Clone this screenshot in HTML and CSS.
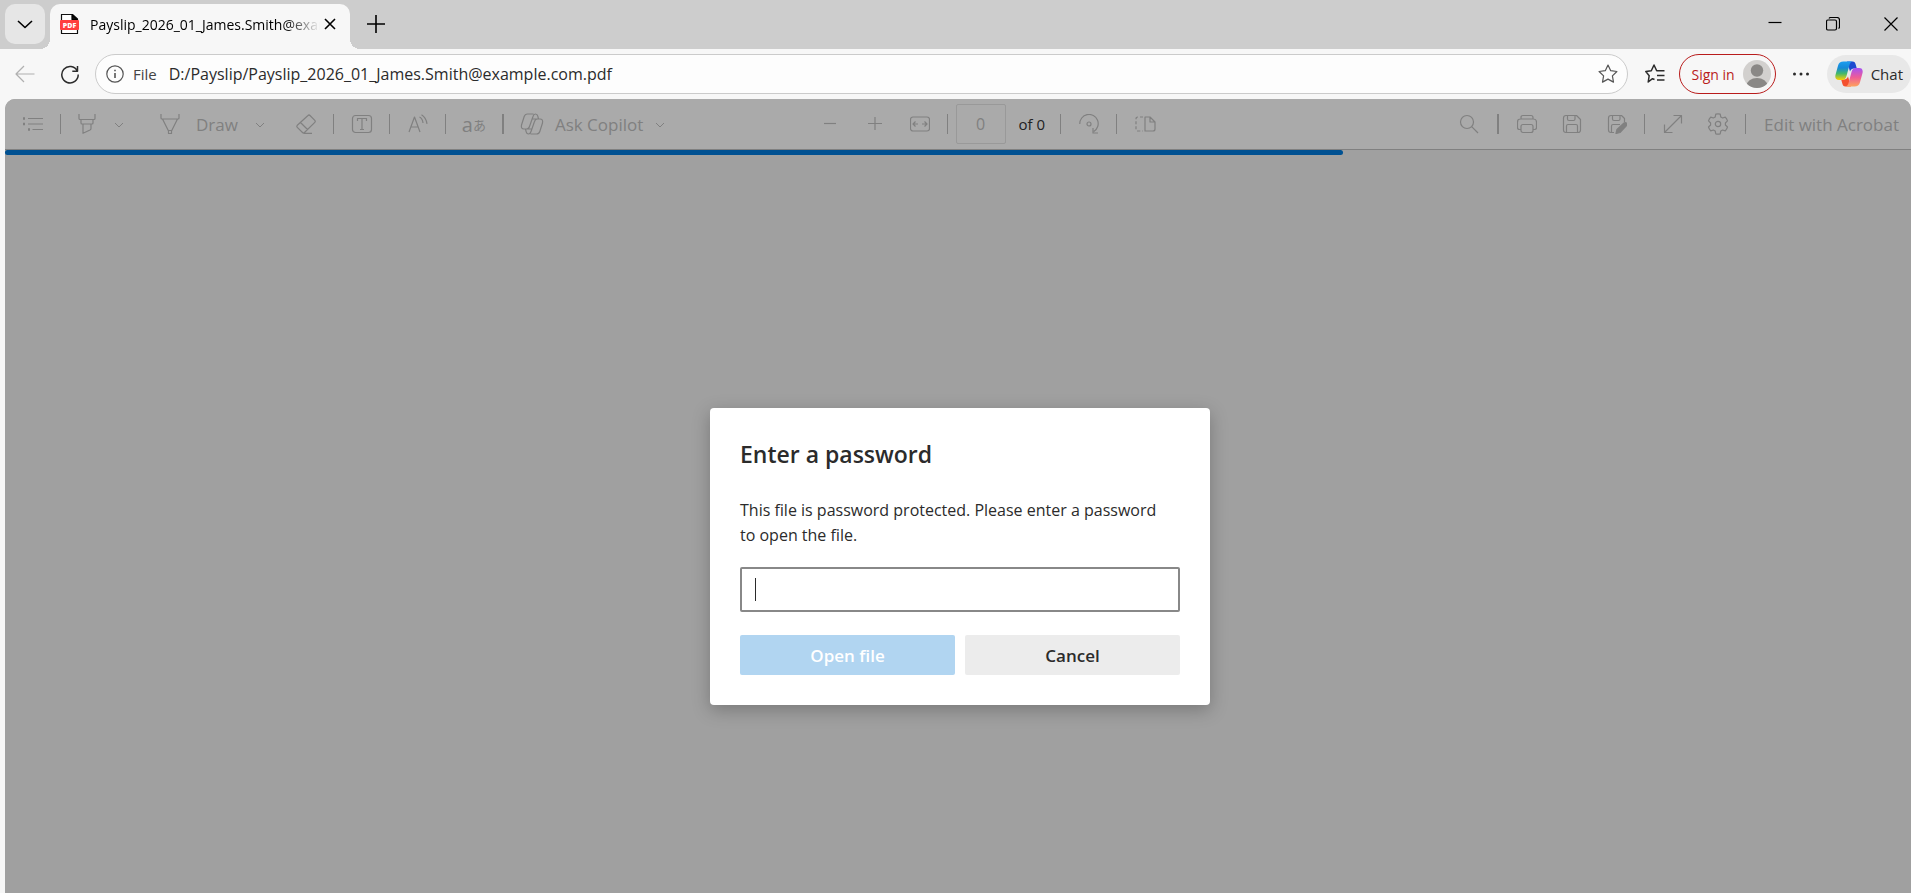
FILE: index.html
```html
<!DOCTYPE html>
<html lang="en">

<head>
  <meta charset="UTF-8">
  <meta name="viewport" content="width=device-width, initial-scale=1.0">
  <title>Payslip_2026_01_James.Smith@example.com.pdf</title>

  <link rel="stylesheet" href="styles.css">
</head>

<body>
  <header class="tab-strip">
    <button class="tab-menu" aria-label="Tab actions">
      <svg width="16" height="16" viewBox="0 0 16 16"><path d="M1 5l7 6.5 7-6.5" /></svg>
    </button>
    <div class="tab">
      <svg class="pdf-icon" width="20" height="20" viewBox="0 0 20 20">
        <path d="M1.5 19.5V.5h11l5 4.5v14.5z" fill="#fff" stroke="#111" />
        <path d="M12 1v4.500h5z" fill="#111" />
        <rect y="6" width="19" height="10" rx="1" fill="#ff3e3e" stroke="none" />
        <text x="9.5" y="14" text-anchor="middle">PDF</text>
      </svg>
      <span class="tab-title">Payslip_2026_01_James.Smith@example.com.pdf</span>
      <button class="tab-close" aria-label="Close tab">
        <svg width="12" height="12" viewBox="0 0 12 12"><path d="M1 1l10 10M11 1L1 11" /></svg>
      </button>
    </div>
    <button class="new-tab" aria-label="New tab">
      <svg width="20" height="20" viewBox="0 0 20 20"><path d="M10 1v18M1 10h18" /></svg>
    </button>
    <div class="window-controls">
      <button aria-label="Minimize"><svg width="14" height="14" viewBox="0 0 14 14"><path d="M.5 5.500h13" /></svg></button>
      <button aria-label="Restore"><svg width="14" height="14" viewBox="0 0 14 14"><rect x=".5" y="3" width="10" height="10" rx="1.5" /><path d="M3 1.500q.5-1 1.500-1H11q2.500 0 2.500 2.500v7q0 1-1 1.500" /></svg></button>
      <button aria-label="Close"><svg width="14" height="14" viewBox="0 0 14 14"><path d="M.5.5l13 13M13.500.5l-13 13" /></svg></button>
    </div>
  </header>

  <nav class="address-bar">
    <button class="back" aria-label="Back" disabled>
      <svg width="20" height="20" viewBox="0 0 20 20"><path d="M19.5 10H1M9 2L1 10l8 8" /></svg>
    </button>
    <button class="reload" aria-label="Refresh">
      <svg width="20" height="20" viewBox="0 0 20 20"><path d="M17.3 7A8.2 8.2 0 1 0 18.2 10.5M17.5 2v5.200h-5.200" /></svg>
    </button>
    <div class="url-box">
      <svg width="18" height="18" viewBox="0 0 18 18"><circle cx="9" cy="9" r="8.2" /><path d="M9 8v5M9 4.700v1.600" stroke-width="1.6" /></svg>
      <label class="scheme" for="url">File</label>
      <input class="url" id="url" type="text" value="D:/Payslip/Payslip_2026_01_James.Smith@example.com.pdf" spellcheck="false">
      <button class="favorite" aria-label="Add to favorites">
        <svg width="20" height="20" viewBox="0 0 20 20"><path d="M10 1l2.700 5.700 6.200.8-4.500 4.400 1.100 6.200-5.500-3-5.500 3 1.100-6.200L1.100 7.500l6.200-.8z" /></svg>
      </button>
    </div>
    <button class="favorites" aria-label="Favorites">
      <svg width="20" height="20" viewBox="0 0 20 20"><path d="M9.5 15.500l-2-.8-4.300 3.300 1-6.300L.8 7.600l5.500-.9L9 1l2.700 5.700H19.500M12 11.500h7.500M12 16h7.500" /></svg>
    </button>
    <button class="sign-in">Sign in
      <svg width="28" height="28" viewBox="0 0 28 28">
        <clipPath id="face"><circle cx="14" cy="14" r="14" /></clipPath>
        <g clip-path="url(#face)">
          <rect width="28" height="28" fill="#d2d0ce" />
          <circle cx="14" cy="10.5" r="6.2" fill="#8a8886" />
          <ellipse cx="14" cy="26" rx="10.5" ry="8" fill="#8a8886" />
        </g>
      </svg>
    </button>
    <button class="more" aria-label="Settings and more">
      <svg width="18" height="18" viewBox="0 0 18 18"><circle cx="2.5" cy="9" r="1.5" /><circle cx="9" cy="9" r="1.5" /><circle cx="15.5" cy="9" r="1.5" /></svg>
    </button>
    <button class="chat">
      <svg width="28" height="26" viewBox="0 0 28 26">
        <defs>
          <linearGradient id="cool" x1="0" y1="0" x2="0" y2="1">
            <stop offset="0" stop-color="#1b9df0" />
            <stop offset=".35" stop-color="#1589d6" />
            <stop offset=".65" stop-color="#43b86b" />
            <stop offset="1" stop-color="#ffd000" />
          </linearGradient>
          <linearGradient id="warm" x1="0" y1="0" x2="0" y2="1">
            <stop offset="0" stop-color="#a552f5" />
            <stop offset=".5" stop-color="#ee5c98" />
            <stop offset="1" stop-color="#ffa35c" />
          </linearGradient>
        </defs>
        <path d="M12 .5h5.500c2 0 2.700 1.200 3.200 3l1.100 4H19c-2 0-3.200 1-4 3z" fill="#1c4bd0" />
        <path d="M16 25.500h-5.500c-2 0-2.700-1.200-3.200-3l-1.100-4H9c2 0 3.200-1 4-3z" fill="#f4502e" />
        <path d="M8.500.5H18c-2 0-3 1.500-3.700 4L11.500 15c-.8 2.900-2 4-4.200 4H4C.8 19-.3 17 .6 13.500L3 4.800C3.800 1.800 5.500.5 8.500.5z" fill="url(#cool)" />
        <path d="M19.500 25.500H10c2 0 3-1.500 3.700-4L16.500 11c.8-2.900 2-4 4.200-4H24c3.200 0 4.300 2 3.400 5.500L25 21.200c-.8 3-2.500 4.300-5.500 4.300z" fill="url(#warm)" />
      </svg>
      Chat
    </button>
  </nav>

  <main class="viewer">
    <div class="toolbar">
      <div class="tools">
        <button class="tool" aria-label="Contents">
          <svg width="22" height="20" viewBox="0 0 22 20"><path d="M6 4.500h15M6 10h15M10.500 15.500H21" /><path d="M1 4.500h2M1 10h2M6 15.500h2" stroke-width="2.4" /></svg>
        </button>
        <span class="divider"></span>
        <button class="split highlight" aria-label="Highlight">
          <svg width="20" height="20" viewBox="0 0 20 20"><path d="M2 0v4.500q0 1 1 1h14q1 0 1-1V0M4 5.500v3.500q0 1 1 1h10q1 0 1-1V5.500M6 10v9.300l7-3.300q1-.5 1-1.500V10" /></svg>
          <svg class="chevron" width="12" height="12" viewBox="0 0 12 12"><path d="M2 5l4 4 4-4" /></svg>
        </button>
        <button class="split draw">
          <svg width="20" height="20" viewBox="0 0 20 20"><path d="M1 0v4q0 1 1 1h16q1 0 1-1V0M2.500 5l6 12v2.500h3V17l6-12M8.500 16.500h3" /></svg>
          <span>Draw</span>
          <svg class="chevron" width="12" height="12" viewBox="0 0 12 12"><path d="M2 5l4 4 4-4" /></svg>
        </button>
        <button class="tool" aria-label="Erase">
          <svg width="20" height="20" viewBox="0 0 20 20"><path d="M12 1.500q1-1 2 0l4.800 4.800q1 1 0 2L8.500 18.500q-1 1-2 0L1.300 13.300q-1-1 0-2zM4.500 8.500l7 7M7.500 19.300H16" /></svg>
        </button>
        <span class="divider"></span>
        <button class="tool" aria-label="Add text">
          <svg width="22" height="20" viewBox="0 0 22 20"><rect x="1.5" y="1.5" width="19" height="17" rx="3" /><path d="M6.500 7V4.500h9V7M11 4.500v11M9 15.500h4" /></svg>
        </button>
        <span class="divider"></span>
        <button class="tool" aria-label="Read aloud">
          <svg width="20" height="20" viewBox="0 0 20 20"><path d="M1 18L6.500 3l5.500 15M3 13h7M11.500 3q3 1.500 3.500 6M13.500.8q4.500 2.700 5.500 9" /></svg>
        </button>
        <span class="divider"></span>
        <button class="tool translate" aria-label="Translate">a<span>あ</span></button>
        <span class="divider thick"></span>
        <button class="split copilot">
          <svg width="24" height="22" viewBox="0 0 24 22"><path d="M13.500 1H7.500Q5 1 4.200 3.500L1.500 12q-.8 4 2.500 4h2.500q2.200 0 3-2.500L13 3.500Q13.700 1 15.500 1q1.800 0 2.300 2.200L18.500 6M10.500 21h6q2.500 0 3.300-2.500L22.500 10q.8-4-2.500-4h-2.500q-2.200 0-3 2.500L11 18.500Q10.300 21 8.500 21q-1.800 0-2.300-2.200L5.500 16M12 6h6M6 16h6" /></svg>
          <span>Ask Copilot</span>
          <svg class="chevron" width="12" height="12" viewBox="0 0 12 12"><path d="M2 5l4 4 4-4" /></svg>
        </button>
      </div>

      <div class="tools paging">
        <button class="tool" aria-label="Zoom out"><svg width="14" height="14" viewBox="0 0 14 14"><path d="M1 6.500h12" /></svg></button>
        <button class="tool" aria-label="Zoom in"><svg width="14" height="14" viewBox="0 0 14 14"><path d="M7 0v13M0 6.500h14" /></svg></button>
        <button class="tool" aria-label="Fit to width">
          <svg width="20" height="16" viewBox="0 0 20 16"><rect x=".5" y="1" width="19" height="14" rx="2.5" /><path d="M8 8H3.500M5.500 5.500L3 8l2.500 2.500M12 8h4.500M14.500 5.500L17 8l-2.500 2.500" /></svg>
        </button>
        <span class="divider"></span>
        <input class="page-number" type="text" value="0" aria-label="Page number" disabled>
        <span class="page-count">of 0</span>
        <span class="divider"></span>
        <button class="tool" aria-label="Rotate">
          <svg width="20" height="20" viewBox="0 0 20 20"><path d="M.8 10a9.200 9.200 0 1 1 14 7.500M14 14v5h5" /><circle cx="10" cy="10" r="2" /></svg>
        </button>
        <span class="divider"></span>
        <button class="tool" aria-label="Page view">
          <svg width="22" height="18" viewBox="0 0 22 18"><path d="M11 2h5l5 5v7q0 2-2 2h-8zM16 2v5h5" /><path d="M9 2H4Q2 2 2 4v10q0 2 2 2h5" stroke-dasharray="3 2" /></svg>
        </button>
      </div>

      <div class="tools actions">
        <button class="tool" aria-label="Find"><svg width="20" height="20" viewBox="0 0 20 20"><circle cx="8" cy="8" r="6.5" /><path d="M12.700 12.700L19 19" /></svg></button>
        <span class="divider thick"></span>
        <button class="tool" aria-label="Print">
          <svg width="20" height="20" viewBox="0 0 20 20"><path d="M4 15.500H2.500q-2 0-2-2V8q0-3 3-3h13q3 0 3 3v5.500q0 2-2 2H16M4 5V3.500Q4 1.500 6 1.500h8q2 0 2 2V5" /><rect x="4" y="10.5" width="12" height="8" rx="2" /></svg>
        </button>
        <button class="tool" aria-label="Save">
          <svg width="20" height="20" viewBox="0 0 20 20"><path d="M4 1.500h10.500l4 4V16q0 2.500-2.500 2.500H4q-2.500 0-2.500-2.500V4q0-2.500 2.500-2.500zM5.500 1.500V5q0 1.500 1.500 1.500h4.500q1.500 0 1.500-1.500V1.500M4.500 18.500V12q0-1.500 1.500-1.500h8q1.500 0 1.500 1.500v6.500" /></svg>
        </button>
        <button class="tool" aria-label="Save as">
          <svg width="20" height="20" viewBox="0 0 20 20"><path d="M7 18.500H4q-2.500 0-2.500-2.500V4q0-2.500 2.500-2.500h10.500l3 3V8M5.500 1.500V5q0 1.500 1.500 1.500h4.500q1.500 0 1.500-1.500V1.500M4.500 18.500V12q0-1.500 1.500-1.500h7" /><path class="solid" d="M9 19.500l1-4 7-6.500q1.500-1 2.600.3 1 1.200-.1 2.400L13 18.500z" /></svg>
        </button>
        <span class="divider"></span>
        <button class="tool" aria-label="Full screen"><svg width="20" height="20" viewBox="0 0 20 20"><path d="M1.500 18.500l17-17M10.500 1.500h8v8M1.500 10.500v8h8" /></svg></button>
        <button class="tool" aria-label="Settings">
          <svg width="22" height="22" viewBox="0 0 22 22"><circle cx="11" cy="11" r="2.7" /><path d="M8.800 1.200q2.200-.5 4.400 0l.6 2.800 1.800 1 2.700-.9q1.500 1.600 2.200 3.800L18.400 10v2l2.100 2q-.7 2.200-2.200 3.900l-2.700-.9-1.800 1-.6 2.800q-2.200.5-4.400 0L8.200 18l-1.800-1-2.700.9Q2.200 16.200 1.500 14l2.100-2v-2L1.500 7.900q.7-2.200 2.200-3.800l2.700.9 1.800-1z" /></svg>
        </button>
        <span class="divider"></span>
        <button class="acrobat">Edit with Acrobat</button>
      </div>
    </div>

    <progress class="loading" max="100" value="70.2" aria-label="Loading"></progress>

    <div class="overlay">
      <form class="dialog" role="dialog" aria-labelledby="dialog-title">
        <h1 id="dialog-title">Enter a password</h1>
        <label for="password">This file is password protected. Please enter a password to open the file.</label>
        <input class="password" id="password" type="password">
        <div class="dialog-buttons">
          <button class="open" type="submit" disabled>Open file</button>
          <button class="cancel" type="button">Cancel</button>
        </div>
      </form>
    </div>
  </main>
</body>

</html>
```
FILE: styles.css
```css
* {
  box-sizing: border-box;
}

body {
  background-color: #f7f7f7;
  display: flex;
  flex-direction: column;
  font-family: "Open Sans", "Noto Sans CJK JP", sans-serif;
  font-size: 16px;
  margin: 0;
  min-height: 100vh;
}

button,
input {
  background: none;
  border: 0;
  color: inherit;
  font: inherit;
  margin: 0;
  padding: 0;
}

button {
  align-items: center;
  display: flex;
  flex-shrink: 0;
  justify-content: center;
  white-space: nowrap;
}

svg {
  fill: none;
  flex-shrink: 0;
  stroke: currentColor;
  stroke-linejoin: round;
  stroke-width: 1.2;
}

/* Tabs */

.tab-strip {
  background-color: #cdcdcd;
  display: flex;
  height: 49px;
  padding: 4px 13px 0 5px;
}

.tab-menu {
  background-color: #e6e6e6;
  border-radius: 10px;
  height: 40px;
  width: 40px;
}

.tab-menu svg,
.tab-close svg,
.new-tab svg {
  stroke-width: 1.6;
}

.tab {
  align-items: center;
  background-color: #f7f7f7;
  border-radius: 10px 10px 0 0;
  display: flex;
  font-size: 14px;
  margin-left: 5px;
  padding: 0 14px 5px 10px;
  position: relative;
  width: 300px;
}

/* the flared feet of the active tab */
.tab::before,
.tab::after {
  bottom: 0;
  content: "";
  height: 10px;
  position: absolute;
  width: 10px;
}

.tab::before {
  background: radial-gradient(circle at 0 0, transparent 10px, #f7f7f7 10px);
  right: 100%;
}

.tab::after {
  background: radial-gradient(circle at 100% 0, transparent 10px, #f7f7f7 10px);
  left: 100%;
}

.pdf-icon text {
  fill: #fff;
  font-size: 7px;
  font-weight: 800;
  stroke: none;
}

.tab-title {
  flex: 1;
  margin: 0 4px 0 10px;
  mask-image: linear-gradient(to right, #000 85%, transparent);
  overflow: hidden;
  white-space: nowrap;
}

.new-tab {
  height: 40px;
  margin-left: 6px;
  width: 40px;
}

.window-controls {
  display: flex;
  gap: 44px;
  height: 40px;
  margin-left: auto;
}

/* Address bar */

.address-bar {
  align-items: center;
  color: #2b2b2b;
  display: flex;
  height: 50px;
  padding-left: 15px;
}

.back {
  color: #b0b0b0;
  margin-right: 25px;
}

.reload {
  margin-right: 15px;
}

.reload svg,
.favorites svg {
  stroke-width: 1.5;
}

.url-box {
  align-items: center;
  background-color: #fdfdfd;
  border: 1px solid #cbcbcb;
  border-radius: 20px;
  display: flex;
  flex: 1;
  height: 40px;
  padding: 0 9px 0 10px;
}

.url-box svg {
  color: #555;
}

.scheme {
  color: #444;
  font-size: 15px;
  margin: 0 12px 0 9px;
}

.url {
  flex: 1;
  min-width: 0;
  outline: 0;
}

.favorites {
  margin: 0 14px 0 17px;
}

.sign-in {
  border: 1px solid #b91c1c;
  border-radius: 20px;
  color: #b91c1c;
  font-size: 14px;
  gap: 8px;
  height: 40px;
  padding: 0 4px 0 12px;
}

.sign-in svg,
.chat svg {
  stroke: none;
}

.more {
  margin: 0 17px 0 16px;
}

.more svg {
  fill: currentColor;
  stroke: none;
}

.chat {
  background-color: #e8e8e8;
  border-radius: 20px;
  font-size: 15px;
  gap: 8px;
  height: 38px;
  padding: 0 8px;
}

/* PDF viewer */

.viewer {
  background-color: #a0a0a0;
  border-radius: 10px 10px 0 0;
  display: flex;
  flex: 1;
  flex-direction: column;
  margin-left: 5px;
}

.toolbar {
  background-color: #aaa;
  border-bottom: 1px solid #808080;
  border-radius: 10px 10px 0 0;
  color: #808080;
  display: grid;
  font-size: 17px;
  grid-template-columns: 42% 1fr auto;
  height: 51px;
}

.tools {
  align-items: center;
  display: flex;
  padding-left: 8px;
}

.tool {
  height: 40px;
  width: 40px;
}

.divider {
  background-color: currentColor;
  flex-shrink: 0;
  height: 20px;
  margin: 0 8px 0 7px;
  width: 1px;
}

.divider.thick {
  margin: 0 8px;
  width: 2px;
}

.split {
  height: 40px;
  padding: 0 8px;
}

.chevron {
  stroke-width: 1;
}

.highlight,
.draw {
  gap: 16px;
}

.highlight {
  margin-right: 19px;
}

.draw {
  margin-right: 12px;
}

.copilot {
  gap: 11px;
}

.translate {
  font-size: 20px;
}

.translate span {
  font-size: 13px;
}

.paging {
  padding-left: 4px;
}

.page-number {
  border: 1px solid #999;
  border-radius: 2px;
  font-size: 16px;
  height: 40px;
  text-align: center;
  width: 50px;
}

.page-count {
  color: #222;
  font-size: 15px;
  margin: 0 8px 0 13px;
}

.actions {
  padding-left: 0;
}

.actions .tool + .tool,
.paging .tool + .tool {
  margin-left: 5px;
}

.solid {
  fill: currentColor;
}

.acrobat {
  padding: 0 12px 0 10px;
}

.loading {
  appearance: none;
  border: 0;
  display: block;
  height: 5px;
  width: 100%;
}

.loading::-webkit-progress-bar {
  background-color: transparent;
}

.loading::-webkit-progress-value {
  background-color: #005192;
  border-radius: 3px;
}

/* Password dialog */

.overlay {
  display: flex;
  justify-content: center;
  padding: 253px 0 30px 4px;
}

.dialog {
  background-color: #fff;
  border-radius: 4px;
  box-shadow: 0 5px 18px rgba(0, 0, 0, 0.25);
  color: #2b2b2b;
  display: flex;
  flex-direction: column;
  line-height: 25px;
  padding: 30px;
  width: 500px;
}

.dialog h1 {
  font-size: 23px;
  font-weight: 600;
  line-height: 33px;
  margin: 0 0 27px;
}

.dialog label {
  padding-right: 16px;
}

/* the caret is painted so that it does not blink */
.password {
  background: linear-gradient(#2b2b2b, #2b2b2b) no-repeat 13px center / 1px 23px;
  border: 2px solid #888;
  border-radius: 2px;
  caret-color: transparent;
  height: 45px;
  margin: 19px 0 23px;
  outline: 0;
  padding: 0 13px;
}

.dialog-buttons {
  display: flex;
  gap: 10px;
}

.dialog-buttons button {
  border-radius: 2px;
  flex: 1;
  font-size: 17px;
  font-weight: 600;
  height: 40px;
}

.open {
  background-color: #b1d5f1;
  color: #fff;
}

.cancel {
  background-color: #ececec;
}
```
